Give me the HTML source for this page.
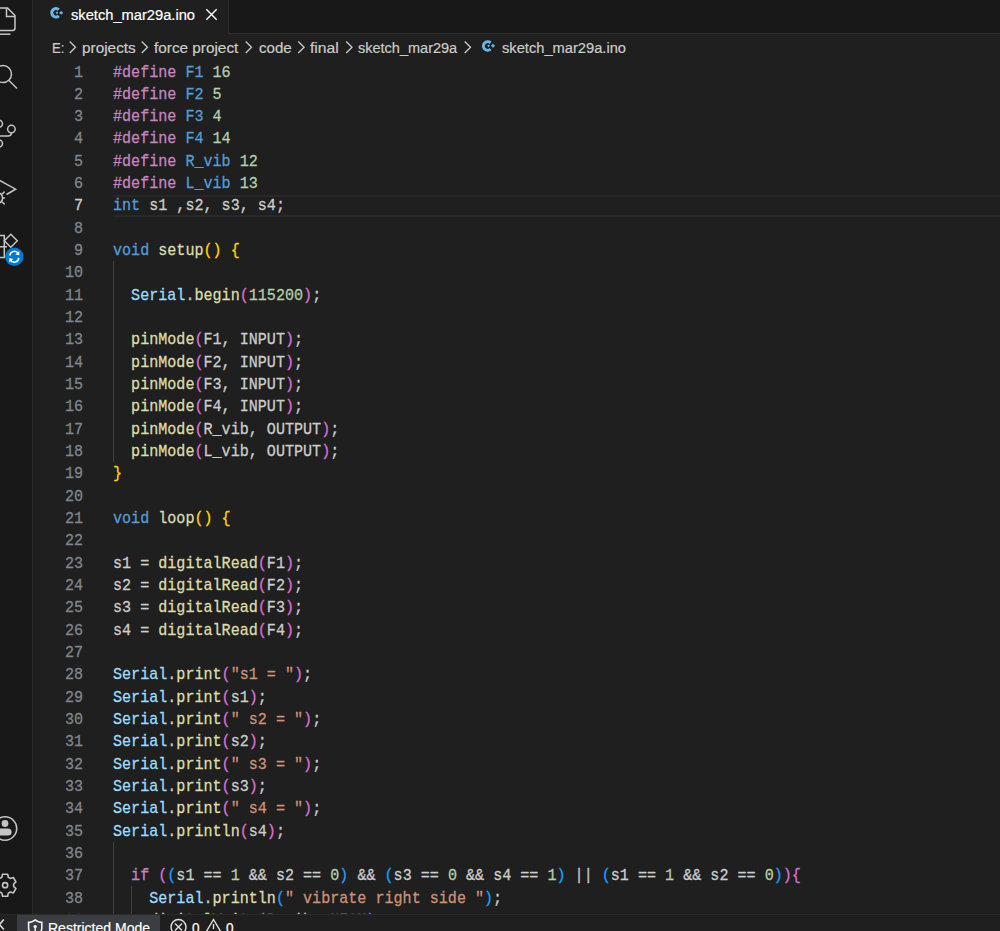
<!DOCTYPE html>
<html><head><meta charset="utf-8">
<style>
*{margin:0;padding:0;box-sizing:border-box}
html,body{width:1000px;height:931px;overflow:hidden;background:#1f1f1f}
body{position:relative;font-family:"Liberation Sans",sans-serif;color:#cccccc}
#act{position:absolute;left:0;top:0;width:33px;height:915px;background:#181818;border-right:1px solid #2b2b2b}
#tabs{position:absolute;left:33px;top:0;width:967px;height:34px;background:#181818;border-bottom:1px solid #2b2b2b}
#tab{position:absolute;left:33px;top:0;width:196px;height:34px;background:#1f1f1f;border-right:1px solid #2b2b2b}
.ui{position:absolute;z-index:5;-webkit-text-stroke:0.2px currentColor;white-space:pre;font-size:15.5px;line-height:30px;transform-origin:0 0}
#status{position:absolute;left:0;top:914px;width:1000px;height:17px;background:#1f1f1f;border-top:1px solid #2b2b2b}
#code{position:absolute;left:0;top:0}
.ln{position:absolute;-webkit-text-stroke:0.3px currentColor;left:33px;width:50px;text-align:right;font-family:"Liberation Mono",monospace;font-size:17px;transform:scaleX(0.8871);transform-origin:100% 0;color:#80868e;white-space:pre;height:22.33px;line-height:22.33px;padding-top:1.5px}
.cl{position:absolute;-webkit-text-stroke:0.3px currentColor;left:113px;font-family:"Liberation Mono",monospace;font-size:17px;transform:scaleX(0.8871);transform-origin:0 0;color:#cccccc;white-space:pre;height:22.33px;line-height:22.33px;padding-top:1.5px}
.k{color:#c586c0}.m{color:#569cd6}.n{color:#b5cea8}.f{color:#dcdcaa}.c{color:#9cdcfe}.s{color:#ce9178}
.ln.act{color:#cccccc}
.b1{color:#ffd700}.b2{color:#da70d6}.b3{color:#179fff}
.guide{position:absolute;width:1px;background:#404040}
#hl{position:absolute;left:113px;top:195px;width:887px;height:22px;border-top:2px solid #282828;border-bottom:2px solid #282828}
svg{position:absolute;overflow:visible}
</style></head><body>
<div id="act"></div>
<!-- activity icons -->
<svg style="left:0;top:0" width="32" height="300" fill="none" stroke="#c5c5c5" stroke-width="1.5">
  <!-- explorer -->
  <path d="M-6 8 H7.5 L15 15.5 V28 Q15 30.5 12.5 30.5 H-6"/>
  <path d="M6.5 8 V16.5 H15"/>
  <path d="M-6 34.2 H10.5"/>
  <!-- search -->
  <circle cx="3" cy="74" r="8.5"/>
  <path d="M9 80.5 L17 88.5"/>
  <!-- source control -->
  <circle cx="-1" cy="123.7" r="3.5"/>
  <circle cx="11.4" cy="129.1" r="3.8"/>
  <circle cx="-1" cy="143.5" r="3.5"/>
  <path d="M11.4 133 Q11.4 136 8 136 H-1"/>
  <!-- run -->
  <path d="M-2 179.5 L15.6 189.2 L6.5 194.5"/>
  <path d="M-4 192.5 Q2.5 192.5 2.5 198 Q2.5 203.5 -4 203.5 M2.2 194 L4.6 191.6 M2.5 198 H5 M2.2 202 L4.6 204.4"/>
  <!-- extensions -->
  <path d="M-2 235.5 H4.3 V257.5 H-2 M-2 246.7 H7"/>
  <path d="M10.8 234.3 L17.3 240.8 L10.8 247.3 L4.3 240.8 Z"/>
</svg>
<svg style="left:0;top:0" width="32" height="300">
  <circle cx="14.3" cy="256.7" r="9.2" fill="#0078d4"/>
  <path d="M9.8 255.5 A4.6 4.6 0 0 1 18.3 253.5" fill="none" stroke="#fff" stroke-width="1.6"/>
  <path d="M18.8 257.9 A4.6 4.6 0 0 1 10.3 259.9" fill="none" stroke="#fff" stroke-width="1.6"/>
  <path d="M19.3 251 L19.3 255.3 L15.3 254.5 Z" fill="#fff"/>
  <path d="M9.3 262.4 L9.3 258.1 L13.3 258.9 Z" fill="#fff"/>
</svg>
<svg style="left:0;top:800px" width="32" height="110" fill="none" stroke="#c5c5c5" stroke-width="1.6">
  <circle cx="5" cy="28.5" r="11.7"/>
  <circle cx="5" cy="23.5" r="3.4" fill="#c5c5c5" stroke="none"/>
  <path d="M-4 28.4 H8 A3.6 3.6 0 0 1 8 35.6 H-4 Z" fill="#c5c5c5" stroke="none"/>
</svg>
<svg style="left:0;top:800px" width="32" height="110">
  <path fill="none" stroke="#c5c5c5" stroke-width="1.6" stroke-linejoin="round" d="M8.32 77.23 L7.64 74.19 L2.56 74.19 L1.88 77.23 L-0.19 78.42 L-3.16 77.49 L-5.71 81.90 L-3.42 84.00 L-3.42 86.40 L-5.71 88.50 L-3.16 92.91 L-0.19 91.98 L1.88 93.17 L2.56 96.21 L7.64 96.21 L8.32 93.17 L10.39 91.98 L13.36 92.91 L15.91 88.50 L13.62 86.40 L13.62 84.00 L15.91 81.90 L13.36 77.49 L10.39 78.42 Z"/>
  <circle cx="5.1" cy="85.2" r="2.6" fill="none" stroke="#c5c5c5" stroke-width="1.6"/>
</svg>
<div id="tabs"></div>
<div id="tab"></div>
<svg style="left:0;top:0" width="1000" height="60">
  <!-- tab file icon -->
  <path d="M58.8 9.7 A4.2 4.2 0 1 0 58.8 15.9" fill="none" stroke="#6cb6e3" stroke-width="3.1"/>
  <path d="M56.9 11.4 L58.2 12.8 L56.9 14.2 L55.6 12.8 Z" fill="#6cb6e3"/>
  <path d="M61.2 10.9 L63.2 12.8 L61.2 14.7 L59.2 12.8 Z" fill="#6cb6e3"/>
  <!-- close -->
  <path d="M206.3 9.3 L216.7 19.7 M216.7 9.3 L206.3 19.7" stroke="#ffffff" stroke-width="1.4"/>
  <!-- breadcrumb icon -->
  <path d="M490.6 42.8 A4.3 4.3 0 1 0 490.6 49.2" fill="none" stroke="#6cb6e3" stroke-width="3"/>
  <path d="M488.6 44.4 L490 45.8 L488.6 47.2 L487.2 45.8 Z" fill="#6cb6e3"/>
  <path d="M493 43.8 L495 45.8 L493 47.8 L491 45.8 Z" fill="#6cb6e3"/>
</svg>

<div class="ui" style="left:51.65px;top:33.00px;color:#cccccc;transform:scaleX(0.8462)">E:</div>
<div class="ui" style="left:81.51px;top:33.00px;color:#cccccc;transform:scaleX(0.9906)">projects</div>
<div class="ui" style="left:154.30px;top:33.00px;color:#cccccc;transform:scaleX(0.9884)">force project</div>
<div class="ui" style="left:258.70px;top:33.00px;color:#cccccc;transform:scaleX(0.9727)">code</div>
<div class="ui" style="left:310.20px;top:33.00px;color:#cccccc;transform:scaleX(1.0107)">final</div>
<div class="ui" style="left:357.90px;top:33.00px;color:#cccccc;transform:scaleX(0.9358)">sketch_mar29a</div>
<div class="ui" style="left:502.00px;top:33.00px;color:#cccccc;transform:scaleX(0.9466)">sketch_mar29a.ino</div>
<div class="ui" style="left:70.60px;top:0.00px;color:#ffffff;transform:scaleX(0.9466)">sketch_mar29a.ino</div>
<div class="ui" style="left:47.80px;top:913.00px;color:#ffffff;transform:scaleX(0.9045)">Restricted Mode</div>
<div class="ui" style="left:192.00px;top:913.00px;color:#ffffff;transform:scaleX(0.8750)">0</div>
<div class="ui" style="left:226.00px;top:913.00px;color:#ffffff;transform:scaleX(0.8750)">0</div>
<svg style="left:0;top:0" width="1000" height="60" fill="none" stroke="#cccccc" stroke-width="1.3">
<path d="M69.7 41.5 L75.5 47.25 L69.7 53"/>
<path d="M141.7 41.5 L147.5 47.25 L141.7 53"/>
<path d="M245.7 41.5 L251.5 47.25 L245.7 53"/>
<path d="M298.3 41.5 L304.1 47.25 L298.3 53"/>
<path d="M346.2 41.5 L352.0 47.25 L346.2 53"/>
<path d="M464.7 41.5 L470.5 47.25 L464.7 53"/>
</svg>
<div id="hl"></div>
<div class="guide" style="left:113px;top:260.97px;height:200.97px"></div>
<div class="guide" style="left:113px;top:841.55px;height:89.32px"></div>
<div class="guide" style="left:131px;top:886.21px;height:44.66px"></div>
<div id="code">
<div class="ln" style="top:60.00px">1</div>
<div class="cl" style="top:60.00px"><span class="k">#define</span> <span class="m">F1</span> <span class="n">16</span></div>
<div class="ln" style="top:82.33px">2</div>
<div class="cl" style="top:82.33px"><span class="k">#define</span> <span class="m">F2</span> <span class="n">5</span></div>
<div class="ln" style="top:104.66px">3</div>
<div class="cl" style="top:104.66px"><span class="k">#define</span> <span class="m">F3</span> <span class="n">4</span></div>
<div class="ln" style="top:126.99px">4</div>
<div class="cl" style="top:126.99px"><span class="k">#define</span> <span class="m">F4</span> <span class="n">14</span></div>
<div class="ln" style="top:149.32px">5</div>
<div class="cl" style="top:149.32px"><span class="k">#define</span> <span class="m">R_vib</span> <span class="n">12</span></div>
<div class="ln" style="top:171.65px">6</div>
<div class="cl" style="top:171.65px"><span class="k">#define</span> <span class="m">L_vib</span> <span class="n">13</span></div>
<div class="ln act" style="top:193.98px">7</div>
<div class="cl" style="top:193.98px"><span class="m">int</span> s1 ,s2, s3, s4;</div>
<div class="ln" style="top:216.31px">8</div>
<div class="cl" style="top:216.31px"></div>
<div class="ln" style="top:238.64px">9</div>
<div class="cl" style="top:238.64px"><span class="m">void</span> <span class="f">setup</span><span class="b1">()</span> <span class="b1">{</span></div>
<div class="ln" style="top:260.97px">10</div>
<div class="cl" style="top:260.97px"></div>
<div class="ln" style="top:283.30px">11</div>
<div class="cl" style="top:283.30px">  <span class="c">Serial</span>.<span class="f">begin</span><span class="b2">(</span><span class="n">115200</span><span class="b2">)</span>;</div>
<div class="ln" style="top:305.63px">12</div>
<div class="cl" style="top:305.63px"></div>
<div class="ln" style="top:327.96px">13</div>
<div class="cl" style="top:327.96px">  <span class="f">pinMode</span><span class="b2">(</span>F1, INPUT<span class="b2">)</span>;</div>
<div class="ln" style="top:350.29px">14</div>
<div class="cl" style="top:350.29px">  <span class="f">pinMode</span><span class="b2">(</span>F2, INPUT<span class="b2">)</span>;</div>
<div class="ln" style="top:372.62px">15</div>
<div class="cl" style="top:372.62px">  <span class="f">pinMode</span><span class="b2">(</span>F3, INPUT<span class="b2">)</span>;</div>
<div class="ln" style="top:394.95px">16</div>
<div class="cl" style="top:394.95px">  <span class="f">pinMode</span><span class="b2">(</span>F4, INPUT<span class="b2">)</span>;</div>
<div class="ln" style="top:417.28px">17</div>
<div class="cl" style="top:417.28px">  <span class="f">pinMode</span><span class="b2">(</span>R_vib, OUTPUT<span class="b2">)</span>;</div>
<div class="ln" style="top:439.61px">18</div>
<div class="cl" style="top:439.61px">  <span class="f">pinMode</span><span class="b2">(</span>L_vib, OUTPUT<span class="b2">)</span>;</div>
<div class="ln" style="top:461.94px">19</div>
<div class="cl" style="top:461.94px"><span class="b1">}</span></div>
<div class="ln" style="top:484.27px">20</div>
<div class="cl" style="top:484.27px"></div>
<div class="ln" style="top:506.60px">21</div>
<div class="cl" style="top:506.60px"><span class="m">void</span> <span class="f">loop</span><span class="b1">()</span> <span class="b1">{</span></div>
<div class="ln" style="top:528.93px">22</div>
<div class="cl" style="top:528.93px"></div>
<div class="ln" style="top:551.26px">23</div>
<div class="cl" style="top:551.26px">s1 = <span class="f">digitalRead</span><span class="b2">(</span>F1<span class="b2">)</span>;</div>
<div class="ln" style="top:573.59px">24</div>
<div class="cl" style="top:573.59px">s2 = <span class="f">digitalRead</span><span class="b2">(</span>F2<span class="b2">)</span>;</div>
<div class="ln" style="top:595.92px">25</div>
<div class="cl" style="top:595.92px">s3 = <span class="f">digitalRead</span><span class="b2">(</span>F3<span class="b2">)</span>;</div>
<div class="ln" style="top:618.25px">26</div>
<div class="cl" style="top:618.25px">s4 = <span class="f">digitalRead</span><span class="b2">(</span>F4<span class="b2">)</span>;</div>
<div class="ln" style="top:640.58px">27</div>
<div class="cl" style="top:640.58px"></div>
<div class="ln" style="top:662.91px">28</div>
<div class="cl" style="top:662.91px"><span class="c">Serial</span>.<span class="f">print</span><span class="b2">(</span><span class="s">&quot;s1 = &quot;</span><span class="b2">)</span>;</div>
<div class="ln" style="top:685.24px">29</div>
<div class="cl" style="top:685.24px"><span class="c">Serial</span>.<span class="f">print</span><span class="b2">(</span>s1<span class="b2">)</span>;</div>
<div class="ln" style="top:707.57px">30</div>
<div class="cl" style="top:707.57px"><span class="c">Serial</span>.<span class="f">print</span><span class="b2">(</span><span class="s">&quot; s2 = &quot;</span><span class="b2">)</span>;</div>
<div class="ln" style="top:729.90px">31</div>
<div class="cl" style="top:729.90px"><span class="c">Serial</span>.<span class="f">print</span><span class="b2">(</span>s2<span class="b2">)</span>;</div>
<div class="ln" style="top:752.23px">32</div>
<div class="cl" style="top:752.23px"><span class="c">Serial</span>.<span class="f">print</span><span class="b2">(</span><span class="s">&quot; s3 = &quot;</span><span class="b2">)</span>;</div>
<div class="ln" style="top:774.56px">33</div>
<div class="cl" style="top:774.56px"><span class="c">Serial</span>.<span class="f">print</span><span class="b2">(</span>s3<span class="b2">)</span>;</div>
<div class="ln" style="top:796.89px">34</div>
<div class="cl" style="top:796.89px"><span class="c">Serial</span>.<span class="f">print</span><span class="b2">(</span><span class="s">&quot; s4 = &quot;</span><span class="b2">)</span>;</div>
<div class="ln" style="top:819.22px">35</div>
<div class="cl" style="top:819.22px"><span class="c">Serial</span>.<span class="f">println</span><span class="b2">(</span>s4<span class="b2">)</span>;</div>
<div class="ln" style="top:841.55px">36</div>
<div class="cl" style="top:841.55px"></div>
<div class="ln" style="top:863.88px">37</div>
<div class="cl" style="top:863.88px">  <span class="k">if</span> <span class="b2">(</span><span class="b3">(</span>s1 == <span class="n">1</span> &amp;&amp; s2 == <span class="n">0</span><span class="b3">)</span> &amp;&amp; <span class="b3">(</span>s3 == <span class="n">0</span> &amp;&amp; s4 == <span class="n">1</span><span class="b3">)</span> || <span class="b3">(</span>s1 == <span class="n">1</span> &amp;&amp; s2 == <span class="n">0</span><span class="b3">)</span><span class="b2">)</span><span class="b2">{</span></div>
<div class="ln" style="top:886.21px">38</div>
<div class="cl" style="top:886.21px">    <span class="c">Serial</span>.<span class="f">println</span><span class="b3">(</span><span class="s">&quot; vibrate right side &quot;</span><span class="b3">)</span>;</div>
<div class="ln" style="top:908.54px">39</div>
<div class="cl" style="top:908.54px">    <span class="f">digitalWrite</span><span class="b3">(</span>R_vib, HIGH<span class="b3">)</span>;</div>
</div>
<div id="status"></div>
<div style="position:absolute;left:0;top:915px;width:16.5px;height:16px;background:#212121"></div>
<div style="position:absolute;left:16.5px;top:915px;width:143px;height:16px;background:#3a3d41"></div>
<svg style="left:0;top:900px" width="300" height="31" fill="none" stroke="#e0e0e0" stroke-width="1.4">
  <path d="M3.8 19.5 L-0.5 24.5 L3.8 29.5" stroke-width="1.6"/>
  <path d="M35.2 20 Q31.5 22.6 28.6 22.3 V28 Q28.6 33 35.2 36 Q41.8 33 41.8 28 V22.3 Q38.9 22.6 35.2 20 Z" stroke="#f0f0f0" stroke-width="1.6"/>
  <circle cx="35.2" cy="26.6" r="1.7" fill="#f0f0f0" stroke="none"/>
  <path d="M35.2 27 V31" stroke="#f0f0f0" stroke-width="1.5"/>
  <circle cx="178.5" cy="27" r="7.5"/>
  <path d="M175 23.5 L182 30.5 M182 23.5 L175 30.5"/>
  <path d="M213.5 19.5 L205.5 33 H221.5 Z"/>
  <path d="M213.5 24 V29"/>
</svg>



</body></html>
